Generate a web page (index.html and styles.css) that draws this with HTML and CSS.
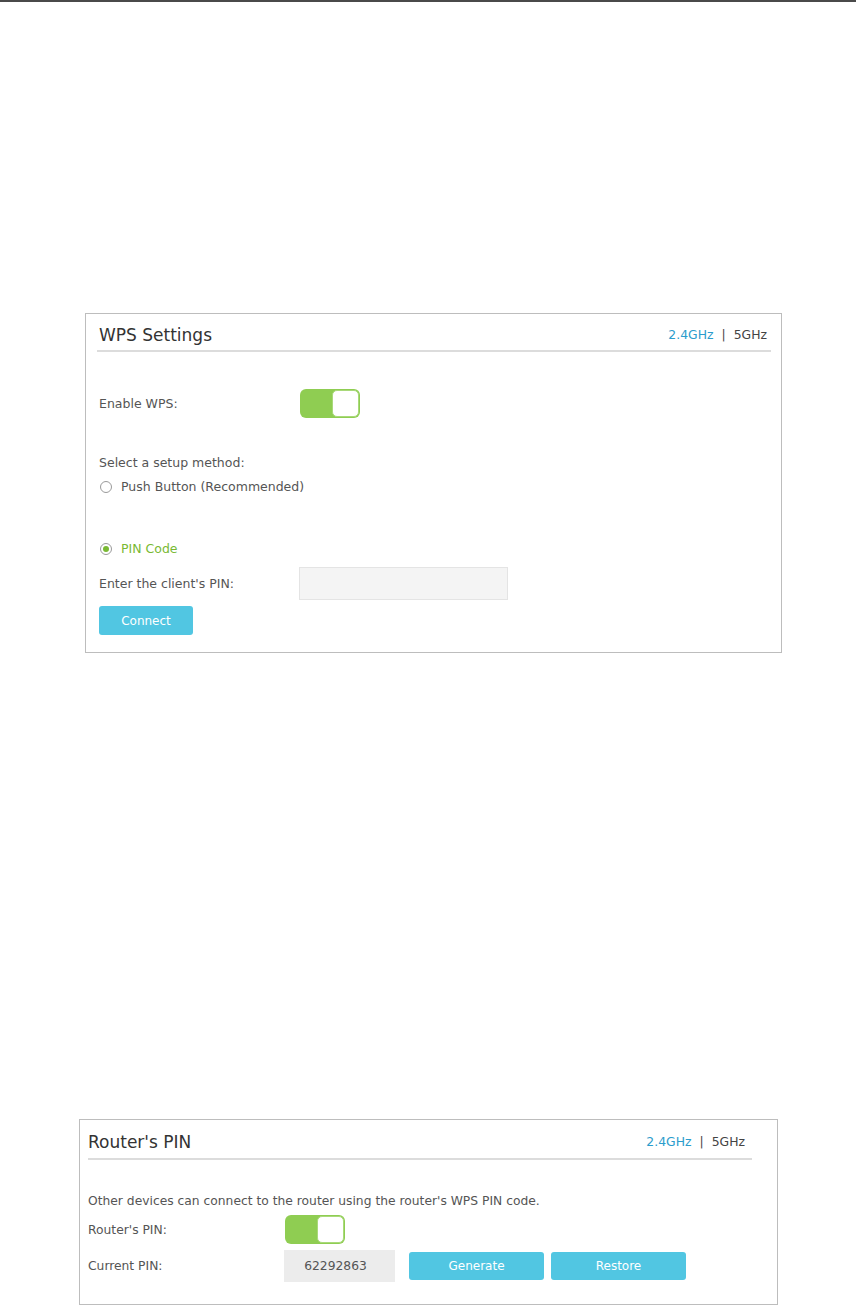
FILE: index.html
```html
<!DOCTYPE html>
<html lang="en">
<head>
  <meta charset="utf-8">
  <title>WPS</title>
  <link rel="stylesheet" href="styles.css">
</head>
<body>
  <div class="page">

    <div class="panel panel-wps">
      <div class="panel-head">
        <span class="title">WPS Settings</span>
        <span class="bands"><span class="band on">2.4GHz</span><span class="sep">|</span><span class="band">5GHz</span></span>
      </div>

      <div class="row row-enable">
        <label class="label">Enable WPS:</label>
        <span class="toggle"><span class="knob"></span></span>
      </div>

      <div class="text row-method">Select a setup method:</div>
      <div class="radio-line">
        <span class="radio"></span><span>Push Button (Recommended)</span>
      </div>
      <div class="radio-line checked row-pin-code">
        <span class="radio"></span><span>PIN Code</span>
      </div>

      <div class="row row-client">
        <label class="label">Enter the client's PIN:</label>
        <input class="field" type="text">
      </div>
      <button class="btn btn-connect">Connect</button>
    </div>

    <div class="panel panel-router">
      <div class="panel-head">
        <span class="title">Router's PIN</span>
        <span class="bands"><span class="band on">2.4GHz</span><span class="sep">|</span><span class="band">5GHz</span></span>
      </div>

      <div class="text row-info">Other devices can connect to the router using the router's WPS PIN code.</div>
      <div class="row row-router-pin">
        <label class="label">Router's PIN:</label>
        <span class="toggle"><span class="knob"></span></span>
      </div>
      <div class="row row-current">
        <label class="label">Current PIN:</label>
        <span class="pin-box">62292863</span>
        <button class="btn btn-wide">Generate</button>
        <button class="btn btn-wide">Restore</button>
      </div>
    </div>

  </div>
</body>
</html>
```

FILE: styles.css
```css
:root {
  --text: #555;
  --title: #333;
  --blue: #2b9ccc;
  --green: #8fcd52;
  --green-text: #79b933;
  --btn: #51c6e2;
  --line: #dcdcdc;
  --frame: #bdbdbd;
  --font: "DejaVu Sans";
}

body {
  margin: 0;
  background: #fff;
  color: var(--text);
  font: 12px var(--font), sans-serif;
}

.page {
  border-top: 2px solid #4a4a4a;
  height: 1303px;
  overflow: hidden;
}

.panel {
  box-sizing: border-box;
  border: 1px solid var(--frame);
}

.panel-wps {
  margin: 311px 0 0 85px;
  width: 697px;
  height: 340px;
  padding: 11px 10px 0 13px;
  font-size: 12.5px;
}

.panel-router {
  margin: 466px 0 0 79px;
  width: 699px;
  height: 186px;
  padding: 11px 0 0 8px;
  font-size: 12.3px;
}

.panel-head {
  display: flex;
  align-items: center;
  justify-content: space-between;
  height: 25px;
  padding: 0 4px 0 2px;
  margin-left: -2px;
  border-bottom: 2px solid var(--line);
  font-size: 12.4px;
}

.panel-router .panel-head {
  box-sizing: border-box;
  width: 664px;
  height: 29px;
  margin-left: 0;
  padding: 0 7px 0 0;
}

.title {
  font-size: 17px;
  color: var(--title);
  position: relative;
  top: -3px;
}

.bands {
  display: flex;
  gap: 8px;
  color: #444;
  position: relative;
  top: -3px;
}

.band.on {color: var(--blue)}

.row {
  display: flex;
  align-items: center;
}

.label {
  width: 201px;
  flex: none;
}

.panel-router .label {width: 197px}

.toggle {
  box-sizing: border-box;
  display: flex;
  justify-content: flex-end;
  width: 60px;
  height: 29px;
  padding: 1px;
  border-radius: 6px;
  background: var(--green);
}

.knob {
  box-sizing: border-box;
  width: 27px;
  height: 27px;
  border-radius: 5px;
  background: #fff;
  border: 1px solid #a9d97a;
}

.row-enable {margin-top: 37px}

.row-method {margin-top: 37px; line-height: 16px}

.radio-line {
  display: flex;
  align-items: center;
  gap: 9px;
  margin-top: 8px;
  padding-left: 1px;
  line-height: 16px;
}

.radio {
  box-sizing: border-box;
  width: 12px;
  height: 12px;
  border: 1px solid #9a9a9a;
  border-radius: 50%;
  display: flex;
  align-items: center;
  justify-content: center;
}

.checked {color: var(--green-text)}

.checked .radio::after {
  content: "";
  width: 6px;
  height: 6px;
  border-radius: 50%;
  background: var(--green-text);
}

.row-pin-code {margin-top: 46px}

.row-client {margin-top: 10px}

.field {
  box-sizing: border-box;
  width: 209px;
  height: 33px;
  margin-left: -1px;
  background: #f4f4f4;
  border: 1px solid #e4e4e4;
  outline: 0;
}

.btn {
  border: 0;
  border-radius: 3px;
  background: var(--btn);
  color: #fff;
  font: 12px var(--font), sans-serif;
  cursor: pointer;
}

.btn-connect {
  display: block;
  width: 94px;
  height: 29px;
  margin-top: 6px;
}

.row-info {margin-top: 33px; line-height: 16px}

.row-router-pin {margin-top: 6px}

.row-current {margin-top: 6px}

.pin-box {
  box-sizing: border-box;
  width: 111px;
  height: 32px;
  line-height: 32px;
  margin-left: -1px;
  padding-right: 8px;
  background: #ececec;
  text-align: center;
  color: #555;
}

.btn-wide {
  width: 135px;
  height: 28px;
  margin-left: 14px;
}

.btn-wide + .btn-wide {margin-left: 7px}
```
